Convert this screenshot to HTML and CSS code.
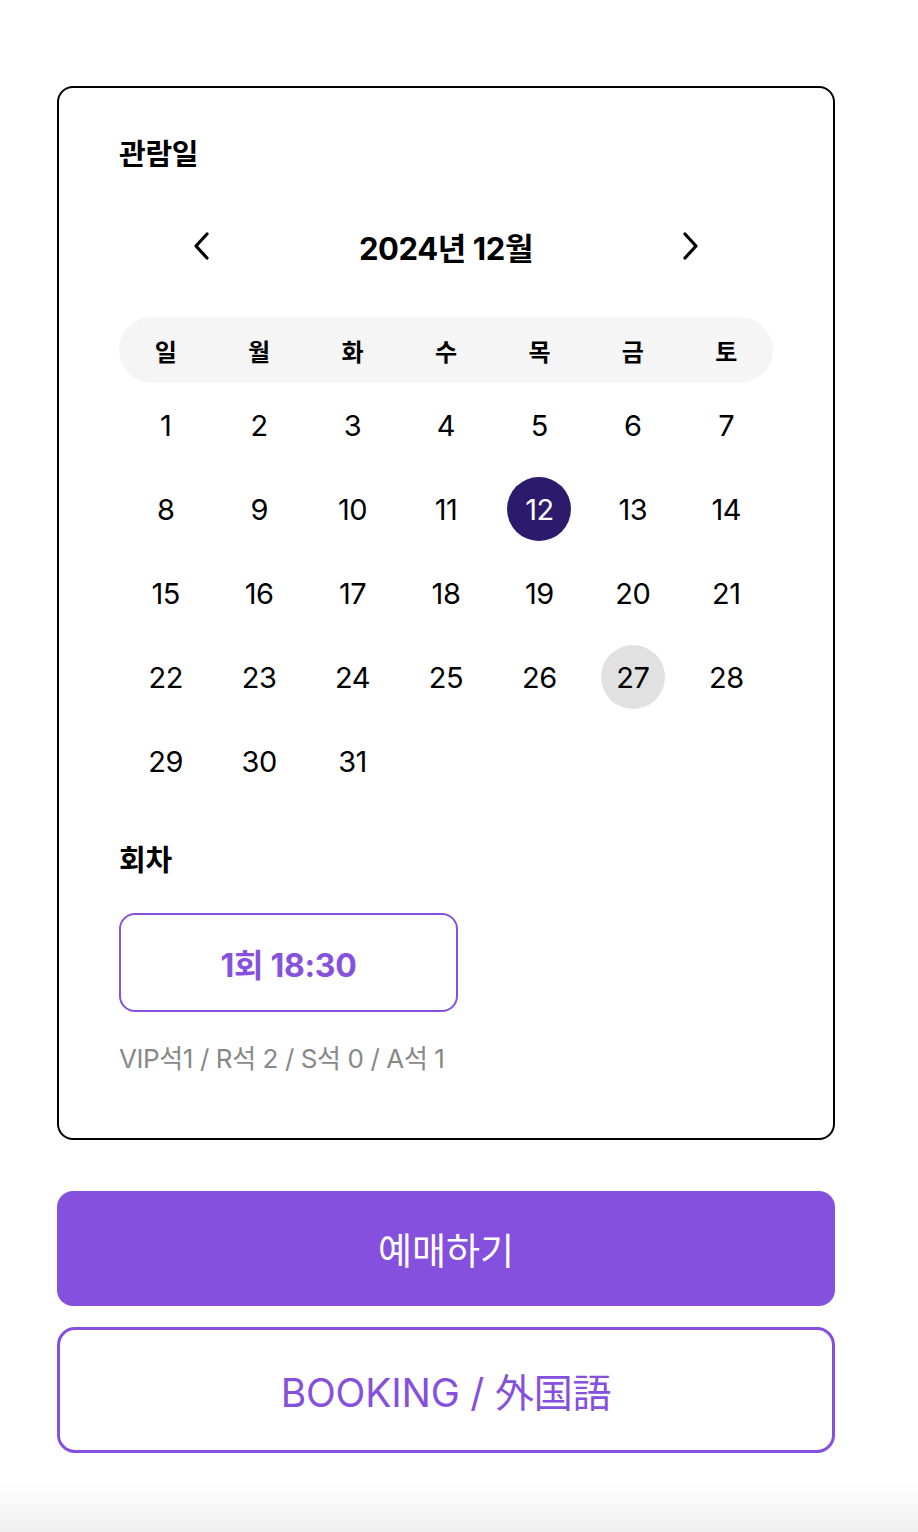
FILE: index.html
```html
<!DOCTYPE html>
<html lang="ko">
<head>
<meta charset="utf-8">
<title>예매</title>
<link rel="stylesheet" href="styles.css">
</head>
<body>
<div class="page">
  <section class="card">
    <h2 class="label">관람일</h2>
    <div class="month-nav">
      <button class="nav-btn" aria-label="이전 달">
        <svg width="18" height="30" viewBox="0 0 18 30"><polyline points="15,3 4,15 15,27" fill="none" stroke="#000" stroke-width="3.2" stroke-linecap="round" stroke-linejoin="round"/></svg>
      </button>
      <div class="month-title">2024년 12월</div>
      <button class="nav-btn" aria-label="다음 달">
        <svg width="18" height="30" viewBox="0 0 18 30"><polyline points="3,3 14,15 3,27" fill="none" stroke="#000" stroke-width="3.2" stroke-linecap="round" stroke-linejoin="round"/></svg>
      </button>
    </div>
    <div class="weekdays">
      <span>일</span><span>월</span><span>화</span><span>수</span><span>목</span><span>금</span><span>토</span>
    </div>
    <div class="days">
      <span class="day">1</span><span class="day">2</span><span class="day">3</span><span class="day">4</span><span class="day">5</span><span class="day">6</span><span class="day">7</span>
      <span class="day">8</span><span class="day">9</span><span class="day">10</span><span class="day">11</span><span class="day selected">12</span><span class="day">13</span><span class="day">14</span>
      <span class="day">15</span><span class="day">16</span><span class="day">17</span><span class="day">18</span><span class="day">19</span><span class="day">20</span><span class="day">21</span>
      <span class="day">22</span><span class="day">23</span><span class="day">24</span><span class="day">25</span><span class="day">26</span><span class="day today">27</span><span class="day">28</span>
      <span class="day">29</span><span class="day">30</span><span class="day">31</span>
    </div>
    <h2 class="label label-session">회차</h2>
    <button class="session">1회 18:30</button>
    <p class="seats">VIP석1 / R석 2 / S석 0 / A석 1</p>
  </section>
  <button class="btn-primary">예매하기</button>
  <button class="btn-outline">BOOKING / 外国語</button>
</div>
<div class="bottom-fade"></div>
</body>
</html>
```

FILE: styles.css
```css
* { box-sizing: border-box; }
html, body { margin: 0; padding: 0; background: #fff; }
body {
  font-family: "Inter", "Noto Sans CJK KR", "Noto Sans", sans-serif;
  color: #000;
}
button { font-family: inherit; cursor: pointer; }

.page {
  padding: 86px 0 0 57px;
  width: 835px;
}

.card {
  width: 778px;
  border: 2px solid #000;
  border-radius: 16px;
  padding: 51px 60px 63px 60px;
}

.label {
  margin: 0;
  font-size: 29px;
  line-height: 32px;
  font-weight: 700;
  letter-spacing: -0.3px;
}

.month-nav {
  margin-top: 51px;
  height: 48px;
  display: flex;
  align-items: center;
  justify-content: space-between;
  padding: 0 73px;
}
.nav-btn {
  border: 0;
  background: none;
  padding: 0;
  width: 18px;
  height: 30px;
  display: flex;
}
.month-title {
  font-size: 31px;
  font-weight: 700;
  letter-spacing: -0.4px;
}

.weekdays {
  margin-top: 47px;
  height: 66px;
  border-radius: 33px;
  background: #f5f5f5;
  display: grid;
  grid-template-columns: repeat(7, 1fr);
  align-items: center;
  justify-items: center;
  font-size: 24px;
  font-weight: 700;
}

.days {
  display: grid;
  grid-template-columns: repeat(7, 1fr);
  grid-auto-rows: 84px;
  align-items: center;
  justify-items: center;
}
.day {
  width: 64px;
  height: 64px;
  border-radius: 50%;
  display: flex;
  align-items: center;
  justify-content: center;
  font-size: 29px;
  font-weight: 400;
  letter-spacing: -0.5px;
}
.day.selected { background: #2c1a6c; color: #fff; }
.day.today { background: #e1e1e1; }

.label-session { margin-top: 42px; }

.session {
  margin-top: 36px;
  width: 339px;
  height: 99px;
  border: 2px solid #8651de;
  border-radius: 16px;
  background: #fff;
  color: #8651de;
  font-size: 32px;
  font-weight: 700;
  letter-spacing: -0.3px;
  display: block;
}

.seats {
  margin: 31px 0 0;
  font-size: 26px;
  line-height: 32px;
  color: #888;
  letter-spacing: -0.4px;
}

.btn-primary {
  margin-top: 51px;
  width: 778px;
  height: 115px;
  border: 0;
  border-radius: 16px;
  background: #8650de;
  color: #fff;
  font-size: 37px;
  font-weight: 400;
  display: block;
}

.btn-outline {
  margin-top: 21px;
  width: 778px;
  height: 126px;
  border: 3px solid #8650de;
  border-radius: 18px;
  background: #fff;
  color: #8650de;
  font-size: 39px;
  font-weight: 400;
  letter-spacing: -0.2px;
  display: block;
}

.bottom-fade {
  position: fixed;
  left: 0;
  right: 0;
  bottom: 0;
  height: 50px;
  background: linear-gradient(to bottom, rgba(240,240,240,0), #efefef);
  pointer-events: none;
}
```
